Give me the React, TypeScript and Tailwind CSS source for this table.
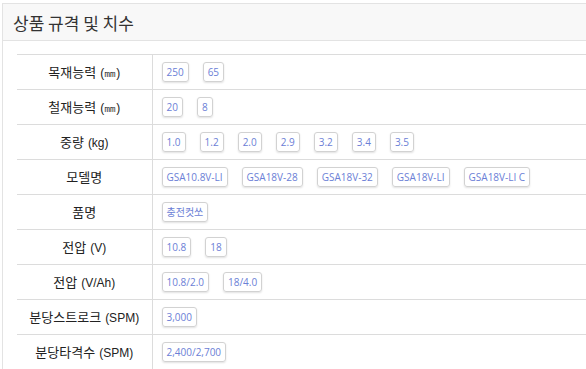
const rows: { label: string; unit?: string; values: string[] }[] = [
  { label: '목재능력', unit: '(㎜)', values: ['250', '65'] },
  { label: '철재능력', unit: '(㎜)', values: ['20', '8'] },
  { label: '중량', unit: '(kg)', values: ['1.0', '1.2', '2.0', '2.9', '3.2', '3.4', '3.5'] },
  { label: '모델명', values: ['GSA10.8V-LI', 'GSA18V-28', 'GSA18V-32', 'GSA18V-LI', 'GSA18V-LI C'] },
  { label: '품명', values: ['충전컷쏘'] },
  { label: '전압', unit: '(V)', values: ['10.8', '18'] },
  { label: '전압', unit: '(V/Ah)', values: ['10.8/2.0', '18/4.0'] },
  { label: '분당스트로크', unit: '(SPM)', values: ['3,000'] },
  { label: '분당타격수', unit: '(SPM)', values: ['2,400/2,700'] },
];

export default function App() {
  return (
    <div className="bg-white h-[369px] overflow-hidden pt-[3px] pl-[2px] font-['Noto_Sans_CJK_KR',sans-serif]">
      <div className="border-t border-l border-[#e3e3e3] w-[600px]">
        <div className="bg-[#f8f8f8] h-[37px] border-b border-[#e3e3e3] flex items-center pl-[10px]">
          <h2 className="text-[17px] text-[#333] leading-none">상품 규격 및 치수</h2>
        </div>
        <div className="pt-[13px] pl-[14px]">
          <table className="w-full border-collapse border-t border-[#dcdcdc]">
            <tbody>
              {rows.map((row, i) => (
                <tr key={i} className="border-b border-[#dcdcdc] h-[35px]">
                  <td className="w-[135px] border-r border-[#dcdcdc] text-center text-[13px] text-[#222] p-0">
                    {row.label}
                    {row.unit && (
                      <span className="font-['Liberation_Sans',sans-serif] text-[12px] ml-[4px]">{row.unit}</span>
                    )}
                  </td>
                  <td className="pl-[9px] p-0">
                    <div className="flex gap-[14px] items-center">
                      {row.values.map((v, j) => (
                        <span
                          key={j}
                          className="h-[20px] flex items-center px-[4px] border border-[#d2d2d2] rounded-[3px] shadow-[0_1px_2px_rgba(0,0,0,0.12)] text-[10px] text-[#6b80d6] font-['Open_Sans','Noto_Sans_CJK_KR',sans-serif]"
                        >
                          {v}
                        </span>
                      ))}
                    </div>
                  </td>
                </tr>
              ))}
            </tbody>
          </table>
        </div>
      </div>
    </div>
  );
}
